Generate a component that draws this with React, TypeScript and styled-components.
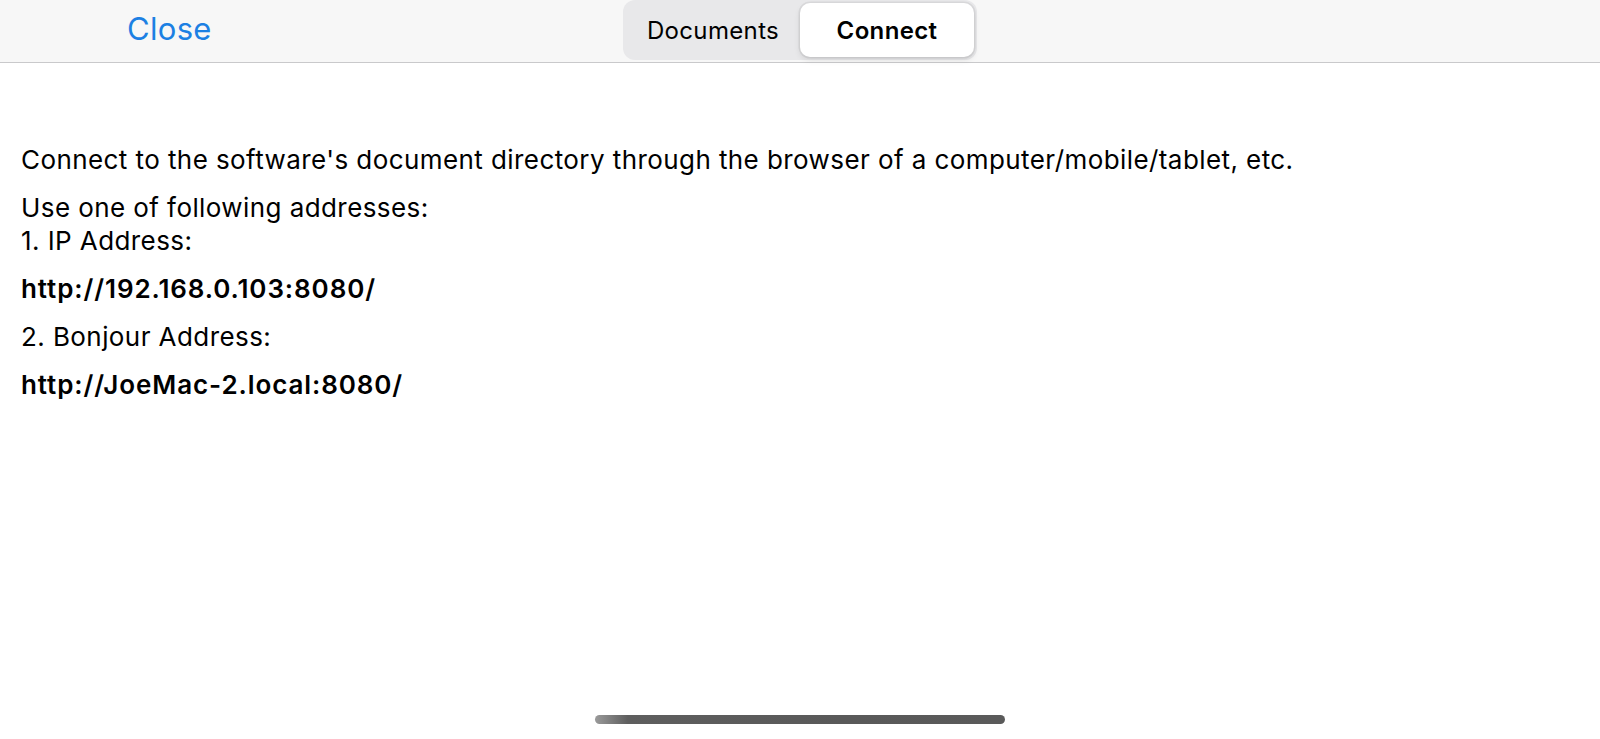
import styled, { createGlobalStyle } from "styled-components";

const GlobalStyle = createGlobalStyle`
    html, body {
        margin: 0;
        padding: 0;
        background: #ffffff;
    }
    body {
        font-family: Inter, "Liberation Sans", Arial, sans-serif;
        color: #000000;
    }
`;

const addresses = [
    { label: "1. IP Address:", url: "http://192.168.0.103:8080/" },
    { label: "2. Bonjour Address:", url: "http://JoeMac-2.local:8080/" },
];

function App() {
    return (
        <>
            <GlobalStyle />
            <Screen>
                <Header>
                    <CloseButton>Close</CloseButton>
                    <Segmented>
                        <Segment>Documents</Segment>
                        <Segment $active>Connect</Segment>
                    </Segmented>
                    <div />
                </Header>

                <Content>
                    <Paragraph>
                        Connect to the software's document directory through the browser of a
                        computer/mobile/tablet, etc.
                    </Paragraph>
                    <Paragraph>
                        Use one of following addresses:
                        <br />
                        {addresses[0].label}
                    </Paragraph>
                    <Url>{addresses[0].url}</Url>
                    <Paragraph>{addresses[1].label}</Paragraph>
                    <Url>{addresses[1].url}</Url>
                </Content>

                <HomeIndicator />
            </Screen>
        </>
    );
}

export default App;

// --- Styled Components ---

const Screen = styled.div`
    position: relative;
    width: 1600px;
    height: 739px;
    overflow: hidden;
    display: flex;
    flex-direction: column;
`;

const Header = styled.header`
    height: 62px;
    flex-shrink: 0;
    background-color: #f7f7f7;
    border-bottom: 1px solid #c9c9cb;
    display: grid;
    grid-template-columns: 1fr auto 1fr;
    align-items: start;
`;

const CloseButton = styled.button`
    justify-self: start;
    margin: 9px 0 0 127px;
    padding: 0;
    border: none;
    background: none;
    font-family: Inter, "Liberation Sans", Arial, sans-serif;
    font-size: 31px;
    line-height: 40px;
    letter-spacing: 0.3px;
    color: #1c80e3;
    cursor: pointer;
`;

const Segmented = styled.div`
    display: flex;
    padding: 3px;
    width: 354px;
    height: 60px;
    box-sizing: border-box;
    background-color: #e8e8ea;
    border-radius: 12px;
`;

const Segment = styled.div<{ $active?: boolean }>`
    flex: 1;
    display: flex;
    align-items: center;
    justify-content: center;
    font-size: 24px;
    letter-spacing: 0.35px;
    font-weight: ${({ $active }) => ($active ? 600 : 400)};
    color: #000000;
    border-radius: 10px;
    background-color: ${({ $active }) => ($active ? "#ffffff" : "transparent")};
    box-shadow: ${({ $active }) =>
        $active ? "0 0 0 1.5px rgba(0,0,0,0.06), 0 3px 6px rgba(0,0,0,0.1)" : "none"};
`;

const Content = styled.main`
    padding: 80px 0 0 21px;
    display: flex;
    flex-direction: column;
    gap: 15px;
`;

const Paragraph = styled.p`
    margin: 0;
    font-size: 26px;
    line-height: 33px;
    letter-spacing: 0.42px;
`;

const Url = styled(Paragraph)`
    font-weight: 600;
    letter-spacing: 0.9px;
`;

const HomeIndicator = styled.div`
    position: absolute;
    left: 595px;
    bottom: 15px;
    width: 410px;
    height: 9px;
    border-radius: 5px;
    background: linear-gradient(90deg, #9a9a9a 0%, #5e5e5e 8%, #595959 60%, #5a5a5a 100%);
`;
